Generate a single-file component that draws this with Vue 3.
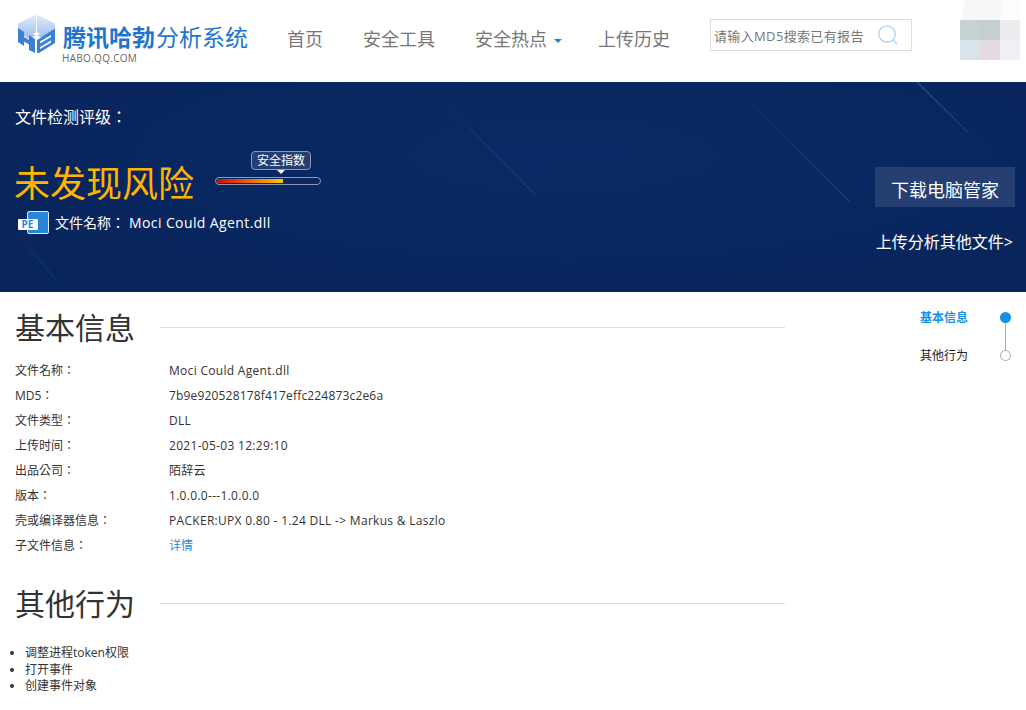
<template>
  <div class="page">
    <header class="top">
      <div class="logo">
        <svg class="logo__icon" width="40" height="42" viewBox="0 0 40 42">
          <defs>
            <linearGradient id="cube" x1="0" y1="0" x2="0" y2="1">
              <stop offset="0" stop-color="#e0eafa" />
              <stop offset="1" stop-color="#9dbeee" />
            </linearGradient>
          </defs>
          <path d="M19.5 1.5 L37 10 Q38 10.5 38 12 V20 L27 26 L19.5 22 L12 26 L1 19 V12 Q1 10.5 2 10 Z" fill="url(#cube)" />
          <path d="M19.5 2 V21" stroke="#fff" stroke-width="0.8" fill="none" />
          <path d="M19.5 16 L20.5 20 L24 21 L20.5 22 L19.5 25 L18.5 22 L15 21 L18.5 20 Z" fill="#fff" />
          <path d="M1 15 L7 19 V24 L12 27 V22 L18 26 V40 L12 37 V31.5 L7 28.5 V33 L1 29 Z" fill="#3a7fdc" />
          <path d="M20 27 L38 15.5 V30 L22 40 H20 Z" fill="#3a7fdc" />
          <path d="M23 28.5 L34 22 V24 L23 30.5 Z M23 34 L34 27.5 V29.5 L23 36 Z" fill="#fff" />
        </svg>
        <div class="logo__text">
          <div class="logo__name"><b>腾讯哈勃</b>分析系统</div>
          <div class="logo__url">HABO.QQ.COM</div>
        </div>
      </div>
      <nav class="nav">
        <a v-for="item in navItems" :key="item.text" class="nav__item">
          {{ item.text }}<i v-if="item.caret" class="nav__caret"></i>
        </a>
      </nav>
      <div class="search">
        <span class="search__text">请输入MD5搜索已有报告</span>
        <svg width="22" height="22" viewBox="0 0 22 22" class="search__icon">
          <circle cx="10" cy="10" r="8.2" fill="none" stroke="#a8d4f2" stroke-width="1.3" />
          <path d="M16 16 L20 20" stroke="#a8d4f2" stroke-width="1.3" />
        </svg>
      </div>
    </header>

    <div class="avatar">
      <div class="avatar__top"></div>
      <div class="avatar__grid">
        <span v-for="c in avatarColors" :key="c" :style="{ background: c }"></span>
      </div>
      <div class="avatar__drop"></div>
    </div>

    <section class="banner">
      <svg class="banner__streaks" width="1026" height="210" viewBox="0 0 1026 210">
        <defs>
          <linearGradient id="streak" x1="0" y1="0" x2="1" y2="1">
            <stop offset="0" stop-color="#2a5596" stop-opacity="0.15" />
            <stop offset="1" stop-color="#2a5596" stop-opacity="0.9" />
          </linearGradient>
        </defs>
        <path d="M916 0 L967 50 L968 50 L918 0 Z" fill="#1f4a8a" />
        <path d="M751 21 L849 120 L850 120 L752 21 Z" fill="url(#streak)" />
        <path d="M446 23 L535 113 L536 113 L447 23 Z" fill="url(#streak)" />
        <path d="M7 141 L55 197 L56 197 L8 141 Z" fill="url(#streak)" opacity="0.6" />
      </svg>
      <div class="banner__left">
        <div class="banner__label">文件检测评级：</div>
        <div class="rating">
          <span class="rating__text">未发现风险</span>
          <div class="meter">
            <span class="meter__tip">安全指数</span>
            <div class="meter__bar"><div class="meter__fill"></div></div>
          </div>
        </div>
        <div class="file">
          <svg class="file__icon" width="32" height="24" viewBox="0 0 32 24">
            <rect x="9.5" y="0.5" width="21" height="22" rx="1.5" fill="#2a84d8" stroke="#dbe9f8" stroke-width="1" />
            <rect x="0" y="8" width="20" height="11" rx="1" fill="#fff" />
            <text x="3.5" y="17" class="file__pe">PE</text>
          </svg>
          <span class="file__label">文件名称：</span>
          <span class="file__name">Moci Could Agent.dll</span>
        </div>
      </div>
      <div class="banner__right">
        <a class="banner__btn">下载电脑管家</a>
        <a class="banner__link">上传分析其他文件&gt;</a>
      </div>
    </section>

    <main class="content">
      <div class="report">
        <h2 class="title"><span>基本信息</span></h2>
        <ul class="info">
          <li v-for="row in infoRows" :key="row.label" class="info__row">
            <span class="info__label">{{ row.label }}</span>
            <span class="info__value" :class="{ info__link: row.link, info__hash: row.hash }">{{ row.value }}</span>
          </li>
        </ul>
        <h2 class="title title--second"><span>其他行为</span></h2>
        <ul class="behaviors">
          <li v-for="b in behaviors" :key="b">{{ b }}</li>
        </ul>
      </div>
      <aside class="side">
        <div class="side__row side__row--on">
          <span>基本信息</span><i class="side__dot side__dot--on"></i>
        </div>
        <div class="side__row">
          <span>其他行为</span><i class="side__dot"></i>
        </div>
      </aside>
    </main>
  </div>
</template>

<script setup>
const navItems = [
  { text: "首页" },
  { text: "安全工具" },
  { text: "安全热点", caret: true },
  { text: "上传历史" },
];

const avatarColors = ["#c5d3d3", "#c5cfd0", "#eeebee", "#d8e4e9", "#e4dbe2", "#f0f1f4"];

const infoRows = [
  { label: "文件名称：", value: "Moci Could Agent.dll" },
  { label: "MD5：", value: "7b9e920528178f417effc224873c2e6a", hash: true },
  { label: "文件类型：", value: "DLL" },
  { label: "上传时间：", value: "2021-05-03 12:29:10" },
  { label: "出品公司：", value: "陌辞云" },
  { label: "版本：", value: "1.0.0.0---1.0.0.0" },
  { label: "壳或编译器信息：", value: "PACKER:UPX 0.80 - 1.24 DLL -> Markus & Laszlo" },
  { label: "子文件信息：", value: "详情", link: true },
];

const behaviors = ["调整进程token权限", "打开事件", "创建事件对象"];
</script>

<style>
html,
body {
  margin: 0;
  background: #fff;
}
</style>

<style scoped>
.page {
  position: relative;
  width: 1026px;
  height: 710px;
  overflow: hidden;
  font-family: "Open Sans", "Noto Sans CJK SC", sans-serif;
  color: #333;
}

.top {
  display: flex;
  align-items: center;
  height: 82px;
}

.logo {
  display: flex;
  align-items: flex-start;
  margin-left: 17px;
  margin-top: -10px;
  width: 270px;
  height: 46px;
}

.logo__icon {
  flex-shrink: 0;
}

.logo__text {
  margin-left: 5px;
  margin-top: 9px;
}

.logo__name {
  font-size: 23px;
  line-height: 30px;
  color: #1e74d0;
  white-space: nowrap;
}

.logo__name b {
  font-weight: 700;
  margin-left: 1px;
  margin-right: 1px;
}

.logo__url {
  font-size: 10px;
  line-height: 12px;
  letter-spacing: 0.3px;
  color: #666;
}

.nav {
  display: flex;
  gap: 40px;
  width: 423px;
  margin-top: -6px;
}

.nav__item {
  font-size: 18px;
  color: #777;
  white-space: nowrap;
}

.nav__caret {
  display: inline-block;
  margin-left: 7px;
  margin-right: -4px;
  vertical-align: middle;
  border: 4px solid transparent;
  border-top: 4px solid #1e80d8;
  border-bottom: 0;
}

.search {
  display: flex;
  align-items: center;
  box-sizing: border-box;
  width: 202px;
  height: 32px;
  margin-top: -12px;
  padding-left: 3px;
  border: 1px solid #ddd;
}

.search__text {
  font-size: 13px;
  letter-spacing: 0.35px;
  color: #777;
  white-space: nowrap;
}

.search__icon {
  margin-left: 13px;
}

.avatar {
  position: absolute;
  top: 0;
  left: 956px;
  width: 70px;
  height: 100px;
}

.avatar__top {
  position: absolute;
  top: 0;
  left: 5px;
  width: 59px;
  height: 20px;
  background: linear-gradient(to right, #f6f8f7 40px, #fdfdfd 40px);
  clip-path: polygon(4px 0, 100% 0, 100% 100%, 0 100%);
}

.avatar__grid {
  position: absolute;
  top: 20px;
  left: 4px;
  display: grid;
  grid-template-columns: repeat(3, 20px);
  grid-template-rows: repeat(2, 20px);
}

.avatar__drop {
  position: absolute;
  top: 82px;
  left: 0;
  width: 61px;
  height: 18px;
  background: #253f72;
  clip-path: polygon(0 0, 100% 0, 100% 4px, 54px 9px, 44px 12px, 41px 17px, 36px 18px, 25px 18px, 19px 15px, 15px 11px, 6px 8px, 0 4px);
}

.banner {
  position: relative;
  display: flex;
  justify-content: space-between;
  height: 210px;
  background: radial-gradient(ellipse at 55% 35%, #0a2a65, #08255c 75%);
  color: #fff;
}

.banner__streaks {
  position: absolute;
  top: 0;
  left: 0;
}

.banner__left {
  position: relative;
  padding-left: 15px;
}

.banner__label {
  margin-top: 25px;
  font-family: "Open Sans", "Noto Sans CJK TC", sans-serif;
  font-size: 16px;
  line-height: 20px;
}

.rating {
  display: flex;
  margin-top: 33px;
}

.rating__text {
  margin-left: -1px;
  font-size: 36px;
  line-height: 48px;
  color: #ffb400;
  white-space: nowrap;
}

.meter {
  position: relative;
  width: 106px;
  margin-left: 21px;
  margin-top: 17px;
}

.meter__tip {
  position: absolute;
  top: -26px;
  left: 36px;
  box-sizing: border-box;
  width: 60px;
  height: 19px;
  border: 1px solid #8c9ab8;
  border-radius: 4px;
  background: #253f72;
  font-size: 12px;
  line-height: 17px;
  text-align: center;
  white-space: nowrap;
}

.meter__tip::after {
  content: "";
  position: absolute;
  left: 25px;
  top: 18px;
  border: 4px solid transparent;
  border-top: 4px solid #fff;
  border-bottom: 0;
}

.meter__bar {
  box-sizing: border-box;
  height: 8px;
  padding: 1px;
  border: 1px solid #8c9ab8;
  border-radius: 4px;
}

.meter__fill {
  width: 66px;
  height: 4px;
  background: linear-gradient(to right, #d40a0a, #ffc800);
}

.file {
  display: flex;
  align-items: center;
  margin-top: 3px;
  margin-left: 3px;
  font-size: 14px;
  line-height: 24px;
  white-space: nowrap;
}

.file__icon {
  margin-right: 5px;
}

.file__label {
  font-family: "Open Sans", "Noto Sans CJK TC", sans-serif;
  width: 74px;
}

.file__name {
  letter-spacing: 0.4px;
}

.file__pe {
  font-family: "Open Sans", sans-serif;
  font-size: 10px;
  font-weight: 700;
  fill: #2a84d8;
}

.banner__right {
  position: relative;
  display: flex;
  flex-direction: column;
  align-items: flex-end;
  padding-right: 11px;
  padding-top: 85px;
}

.banner__btn {
  width: 140px;
  height: 40px;
  background: #253f72;
  font-size: 18px;
  line-height: 46px;
  text-align: center;
}

.banner__link {
  margin-top: 25px;
  margin-right: 2px;
  font-size: 16px;
  line-height: 20px;
}

.content {
  display: flex;
  justify-content: space-between;
}

.report {
  width: 785px;
}

.title {
  display: flex;
  align-items: center;
  margin: 16px 0 0 15px;
  font-size: 30px;
  line-height: 40px;
  font-weight: 400;
  color: #333;
}

.title::after {
  content: "";
  flex: 1;
  height: 1px;
  margin-left: 25px;
  margin-bottom: 2px;
  background: #ddd;
}

.title--second {
  margin-top: 26px;
}

.info {
  margin: 10px 0 0;
  padding: 0 0 0 15px;
  list-style: none;
  font-size: 12px;
}

.info__row {
  display: flex;
  height: 25px;
  line-height: 25px;
}

.info__label {
  width: 154px;
  font-family: "Open Sans", "Noto Sans CJK TC", sans-serif;
}

.info__value {
  letter-spacing: 0.3px;
}

.info__hash {
  letter-spacing: 0.17px;
}

.info__link {
  color: #1e8ce0;
  letter-spacing: 0;
}

.behaviors {
  margin: 21px 0 0;
  padding-left: 25px;
  font-size: 12px;
  line-height: 16.5px;
}

.side {
  width: 106px;
  padding: 6px 0 0;
  font-size: 12px;
}

.side__row {
  display: flex;
  align-items: center;
  height: 38px;
  color: #222;
}

.side__row--on {
  color: #1292e6;
  font-weight: 700;
}

.side__dot {
  position: relative;
  box-sizing: border-box;
  width: 11px;
  height: 11px;
  margin-left: 32px;
  border: 1px solid #aaa;
  border-radius: 50%;
  background: #fff;
}

.side__dot--on {
  border: 0;
  background: #1292e6;
}

.side__dot--on::after {
  content: "";
  position: absolute;
  top: 11px;
  left: 5px;
  width: 1px;
  height: 27px;
  background: #aaa;
}
</style>
